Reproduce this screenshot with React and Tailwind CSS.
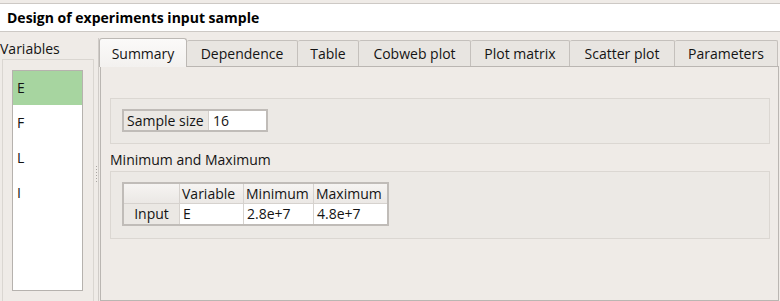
import React from "react";

const tabs = [
  { label: "Summary", w: 88, active: true },
  { label: "Dependence", w: 111 },
  { label: "Table", w: 61 },
  { label: "Cobweb plot", w: 112 },
  { label: "Plot matrix", w: 99 },
  { label: "Scatter plot", w: 105 },
  { label: "Parameters", w: 103 },
];

export default function App() {
  return (
    <div className="w-[780px] h-[301px] bg-[#efebe7] overflow-hidden font-['Open_Sans',sans-serif] text-[14px] text-[#141414] leading-none">
      <div className="pt-[3px]">
        <div className="h-[29px] bg-white border-y border-[#cdc9c5] pl-[7px] flex items-center font-bold text-[14px] text-black">
          Design of experiments input sample
        </div>
      </div>
      <div className="flex mt-[6px] h-[263px]">
        {/* Left column */}
        <div className="w-[94px] flex flex-col">
          <div className="h-[21px] flex items-center pl-[0px]">Variables</div>
          <div className="ml-[2px] w-[92px] flex-1 border border-b-0 border-[#dad6d1] pt-[10px] pl-[9px]">
            <div className="w-[71px] h-[221px] border border-[#b6b2ae] bg-white flex flex-col">
              <div className="h-[34px] bg-[#a7d5a0] flex items-center pl-[4px]">E</div>
              <div className="h-[35px] flex items-center pl-[4px]">F</div>
              <div className="h-[35px] flex items-center pl-[4px]">L</div>
              <div className="h-[35px] flex items-center pl-[4px]">I</div>
            </div>
          </div>
        </div>
        {/* Splitter */}
        <div className="w-[4px] flex flex-col items-center justify-center pt-[8px]">
          <div className="flex flex-col gap-[2px]">
            {[0, 1, 2, 3, 4, 5].map((i) => (
              <div key={i} className="w-[1px] h-[1px] bg-[#a9a5a1]" />
            ))}
          </div>
        </div>
        {/* Right side */}
        <div className="flex-1 flex flex-col border-l border-[#d0ccc8] pr-[1px]">
          <div className="flex h-[28px] items-end pl-[0px]">
            {tabs.map((t) =>
              t.active ? (
                <div
                  key={t.label}
                  style={{ width: t.w }}
                  className="h-[29px] -mb-[1px] relative z-10 bg-gradient-to-b from-[#fbfaf9] to-[#f3f1ef] border border-b-0 border-[#bcb8b4] rounded-t-[3px] flex items-center justify-center pt-[1px]"
                >
                  {t.label}
                </div>
              ) : (
                <div
                  key={t.label}
                  style={{ width: t.w }}
                  className="h-[26px] bg-[#e8e5e1] border border-l-0 border-b-0 border-[#c4c0bc] rounded-t-[2px] flex items-center justify-center"
                >
                  {t.label}
                </div>
              )
            )}
          </div>
          <div className="flex-1 ml-[1px] mr-[0px] border border-[#bab6b2] bg-[#efebe7] pt-[31px] pl-[9px] pr-[8px]">
            <div className="h-[46px] border border-[#dbd7d2] bg-[#ece9e5] pt-[10px] pl-[11px]">
              <div className="flex w-[146px] h-[23px] border-2 border-[#c0bcb8]">
                <div className="w-[85px] bg-[#ebe8e4] flex items-center pl-[3px] border-r border-[#d3cfcb]">
                  Sample size
                </div>
                <div className="flex-1 bg-white flex items-center pl-[4px]">16</div>
              </div>
            </div>
            <div className="h-[27px] flex items-center pt-[4px]">Minimum and Maximum</div>
            <div className="h-[68px] border border-[#dbd7d2] bg-[#ece9e5] pt-[10px] pl-[11px]">
              <div className="w-[267px] border-2 border-[#c0bcb8] bg-white">
                <div className="flex h-[20px] bg-gradient-to-b from-[#f6f4f2] to-[#ebe8e5] border-b border-[#d6d2ce]">
                  <div className="w-[56px] border-r border-[#d6d2ce]" />
                  <div className="w-[64px] border-r border-[#d6d2ce] flex items-center pl-[2px]">Variable</div>
                  <div className="w-[70px] border-r border-[#d6d2ce] flex items-center pl-[2px]">Minimum</div>
                  <div className="flex-1 flex items-center pl-[2px]">Maximum</div>
                </div>
                <div className="flex h-[20px]">
                  <div className="w-[56px] border-r border-[#d6d2ce] bg-[#ebe8e4] flex items-center justify-center">Input</div>
                  <div className="w-[64px] border-r border-[#d6d2ce] flex items-center pl-[3px]">E</div>
                  <div className="w-[70px] border-r border-[#d6d2ce] flex items-center pl-[3px]">2.8e+7</div>
                  <div className="flex-1 flex items-center pl-[3px]">4.8e+7</div>
                </div>
              </div>
            </div>
          </div>
        </div>
      </div>
    </div>
  );
}
